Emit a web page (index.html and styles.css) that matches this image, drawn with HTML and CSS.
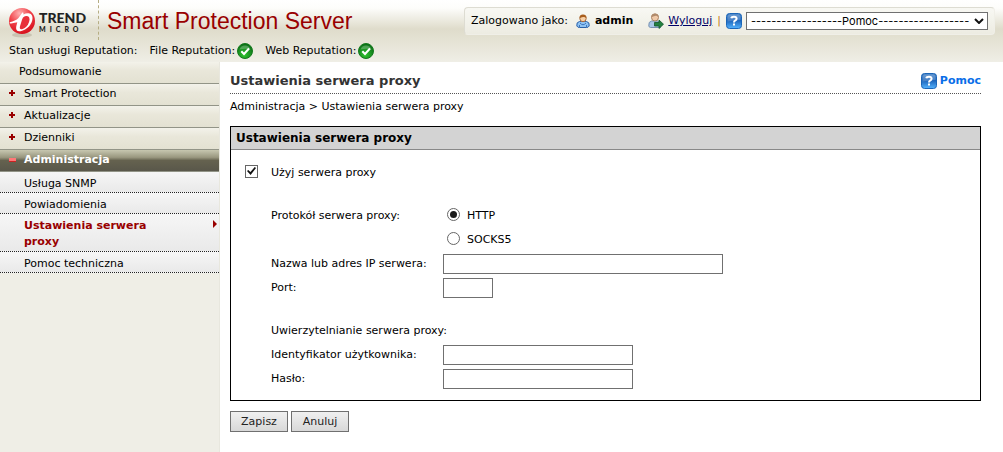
FILE: index.html
```html
<!DOCTYPE html>
<html lang="pl">
<head>
    <meta charset="UTF-8">
    <meta name="viewport" content="width=device-width, initial-scale=1.0">
    <title>Smart Protection Server - Ustawienia serwera proxy</title>
    <link rel="stylesheet" href="styles.css">
</head>
<body>
    <!-- shared icon shapes -->
    <svg class="defs" width="0" height="0" aria-hidden="true">
        <defs>
            <linearGradient id="blue" x1="0" y1="0" x2="0" y2="1">
                <stop offset="0" stop-color="#4a86c8"/>
                <stop offset="0.45" stop-color="#1b62b8"/>
                <stop offset="1" stop-color="#55b4ff"/>
            </linearGradient>
            <radialGradient id="green" cx="0.45" cy="0.75" r="0.7">
                <stop offset="0" stop-color="#2fc52f"/>
                <stop offset="1" stop-color="#0b6e17"/>
            </radialGradient>
            <radialGradient id="red" cx="0.4" cy="0.2" r="0.8">
                <stop offset="0" stop-color="#ffb0b0"/>
                <stop offset="0.5" stop-color="#f0434a"/>
                <stop offset="1" stop-color="#d8101c"/>
            </radialGradient>
            <symbol id="help" viewBox="0 0 16 16">
                <rect x="0.5" y="0.5" width="15" height="15" rx="3" fill="url(#blue)" stroke="#1c66b8"/>
                <path d="M1.5 4q0-2.5 2.5-2.5h8q2.5 0 2.5 2.5v3q-6 0-13 1.500z" fill="#fff" opacity="0.2"/>
                <path d="M5.300 5.200Q5.600 3.800 8 3.800q2.600 0 2.600 1.900 0 1.200-1.500 2-1.100.6-1.100 1.700" fill="none" stroke="#fff" stroke-width="2"/>
                <rect x="7" y="10.500" width="2" height="2" fill="#fff"/>
            </symbol>
            <symbol id="ok" viewBox="0 0 16 16">
                <circle cx="8" cy="8" r="7.500" fill="url(#green)" stroke="#157a1e"/>
                <path d="M2.500 6.500a5.800 5.800 0 0 1 11 0q-5-1.500-11 0z" fill="#fff" opacity="0.25"/>
                <path d="M4.300 8.200l2.700 2.800 5-5.500" fill="none" stroke="#fff" stroke-width="2"/>
            </symbol>
        </defs>
    </svg>

    <header class="header">
        <div class="topbar">
            <div class="logo">
                <svg class="logo-ball" viewBox="0 0 28 32" aria-hidden="true">
                    <ellipse cx="14" cy="28" rx="10" ry="2.500" fill="#9a9078" opacity="0.35"/>
                    <circle cx="14" cy="14" r="13" fill="url(#red)"/>
                    <path d="M15.500 7.500C19 5.500 24.500 5.800 24.500 11c0 6-5.500 12-12 13.200-3.500.6-5-1.500-4.200-5l1-4L3 16.500c-1 0-1.500-.5-1.200-1.300C5.500 14.500 8.500 13 10.500 11l3.500-5c.6-.8 1.600-.3 1.400.5z" fill="#fff"/>
                    <path d="M15 10.500c3-2.300 6.500-1.800 6.500 1.800 0 4.500-3.700 9.200-7.700 10-1.800.3-2.300-1-1.800-3l2-6.500z" fill="#e8303a"/>
                </svg>
                <div class="logo-text">
                    <span class="logo-trend">TREND</span>
                    <span class="logo-micro">MICRO</span>
                </div>
            </div>
            <div class="product">Smart Protection Server</div>
            <div class="userbar">
                <span>Zalogowano jako:</span>
                <svg class="user-icon" viewBox="0 0 14 14" aria-hidden="true">
                    <path d="M.8 12q-.6-4 2.700-4.500h7q3.300.5 2.700 4.500-1 1.500-2.500 1.500H3.300Q1.800 13.500.8 12z" fill="#8fc3f3" stroke="#2b61a8"/>
                    <circle cx="7" cy="4.500" r="3.200" fill="#f7cfa4" stroke="#a5693c"/>
                    <path d="M3.500 4Q3.300.5 7 .5T10.500 4Q9 2.700 7 3T3.500 4z" fill="#a85d1c"/>
                    <path d="M4 9q3 3.500 6 0M3.500 11v2M10.500 11v2" fill="none" stroke="#3c77bf"/>
                </svg>
                <b>admin</b>
                <svg class="logout-icon" viewBox="0 0 16 16" aria-hidden="true">
                    <path d="M.8 13q-.5-4.500 2.700-5h6q3 1 3 4v2.500H2.500Q1.200 14.500.8 13z" fill="#a9c8e6" stroke="#7891b1"/>
                    <circle cx="7" cy="4.500" r="3.500" fill="#efc9a8" stroke="#a98365"/>
                    <path d="M3.300 4.200Q3.300.5 7 .5t3.700 3.700Q9 2.500 7 2.900T3.300 4.200z" fill="#b08a6a"/>
                    <path d="M6.500 9.500h4.500V7l4.500 4.200-4.500 4.300v-2.500H6.500z" fill="#22803f" stroke="#135528" stroke-width="0.800"/>
                </svg>
                <a class="logout" href="#">Wyloguj</a>
                <span class="divider">|</span>
                <svg class="icon" aria-hidden="true"><use href="#help"/></svg>
                <div class="help-select">
                    <select aria-label="Pomoc">
                        <option>------------------Pomoc------------------</option>
                    </select>
                    <svg class="arrow" viewBox="0 0 10 6" aria-hidden="true"><path d="M1 1l4 4 4-4" fill="none" stroke="#111" stroke-width="2"/></svg>
                </div>
            </div>
        </div>
        <div class="status">
            <span>Stan usługi Reputation:</span>
            <span class="status-item">File Reputation: <svg class="icon" aria-hidden="true"><use href="#ok"/></svg></span>
            <span class="status-item">Web Reputation: <svg class="icon" aria-hidden="true"><use href="#ok"/></svg></span>
        </div>
    </header>

    <div class="page">
        <nav class="sidebar">
            <a class="menu plain" href="#">Podsumowanie</a>
            <a class="menu plus" href="#">Smart Protection</a>
            <a class="menu plus" href="#">Aktualizacje</a>
            <a class="menu plus" href="#">Dzienniki</a>
            <a class="menu minus" href="#">Administracja</a>
            <a class="submenu" href="#">Usługa SNMP</a>
            <a class="submenu" href="#">Powiadomienia</a>
            <a class="submenu current" href="#">Ustawienia serwera proxy</a>
            <a class="submenu" href="#">Pomoc techniczna</a>
        </nav>

        <main class="content">
            <div class="title">
                <h1>Ustawienia serwera proxy</h1>
                <a class="help" href="#"><svg class="icon" aria-hidden="true"><use href="#help"/></svg>Pomoc</a>
            </div>
            <div class="breadcrumb">Administracja &gt; Ustawienia serwera proxy</div>

            <form>
                <section class="box">
                    <h2>Ustawienia serwera proxy</h2>
                    <div class="box-body">
                        <div class="use-proxy">
                            <input type="checkbox" id="useproxy" checked>
                            <label for="useproxy">Użyj serwera proxy</label>
                        </div>
                        <div class="fields">
                            <span id="protocol">Protokół serwera proxy:</span>
                            <div class="radios" role="radiogroup" aria-labelledby="protocol">
                                <label><input type="radio" name="protocol" checked>HTTP</label>
                                <label><input type="radio" name="protocol">SOCKS5</label>
                            </div>
                            <label for="server">Nazwa lub adres IP serwera:</label>
                            <input type="text" id="server" class="long">
                            <label for="port">Port:</label>
                            <input type="text" id="port" class="short">
                        </div>
                        <div class="fields">
                            <span class="full">Uwierzytelnianie serwera proxy:</span>
                            <label for="user">Identyfikator użytkownika:</label>
                            <input type="text" id="user">
                            <label for="psw">Hasło:</label>
                            <input type="password" id="psw">
                        </div>
                    </div>
                </section>
                <div class="buttons">
                    <button type="submit">Zapisz</button>
                    <button type="button">Anuluj</button>
                </div>
            </form>
        </main>
    </div>
</body>
</html>
```

FILE: styles.css
```css
* {
    box-sizing: border-box;
}

body {
    margin: 0;
    min-height: 100vh;
    display: flex;
    flex-direction: column;
    font-family: Verdana, "DejaVu Sans", sans-serif;
    font-size: 11px;
    line-height: 16px;
    color: #000;
    background-color: #fff;
}

.defs {
    position: absolute;
}

.icon {
    width: 16px;
    height: 16px;
    flex: none;
}

/* header */
.header {
    height: 62px;
    background: linear-gradient(#fff 0, #fdfdfb 8px, #dfdccb 29px, #e3e1d2 38px, #efeee6 62px);
}

.topbar {
    display: flex;
    height: 40px;
    padding-right: 8px;
}

.logo {
    display: flex;
    align-items: center;
    width: 99px;
    padding-left: 8px;
    border-right: 1px dashed #b5ad83;
}

.logo-ball {
    width: 28px;
    height: 32px;
    margin-top: 6px;
}

.logo-text {
    display: flex;
    flex-direction: column;
    margin: 3px 0 0 3px;
    font-family: Lato, sans-serif;
    font-weight: 900;
    color: #222;
}

.logo-trend {
    font-size: 14px;
    line-height: 14px;
}

.logo-micro {
    font-size: 7px;
    line-height: 8px;
    letter-spacing: 4px;
}

.product {
    flex: 1;
    padding-left: 8px;
    font-family: Arial, "Liberation Sans", sans-serif;
    font-size: 23px;
    line-height: 42px;
    white-space: nowrap;
    color: #990000;
}

.userbar {
    display: flex;
    align-items: center;
    height: 28px;
    margin-top: 7px;
    padding: 0 6px;
    border: 1px solid #dddcd2;
    border-right-color: #f0efe8;
    border-bottom-color: #f0efe8;
    border-radius: 4px;
    background: linear-gradient(#f8f8f3, #edece2);
    white-space: nowrap;
}

.user-icon {
    width: 14px;
    height: 14px;
    margin: 0 5px 0 8px;
}

.logout-icon {
    width: 16px;
    height: 16px;
    margin: 0 4px 0 15px;
}

.logout {
    color: #000066;
}

.divider {
    margin: 0 5px;
    color: #c27a10;
}

.help-select {
    position: relative;
    margin-left: 4px;
}

.help-select select {
    display: block;
    width: 242px;
    height: 18px;
    padding: 0 4px;
    border: 1px solid #707070;
    border-radius: 0;
    background-color: #fff;
    appearance: none;
    font-family: "Segoe UI", Inter, sans-serif;
    font-size: 11px;
    color: #000;
}

.arrow {
    position: absolute;
    top: 6px;
    right: 4px;
    width: 10px;
    height: 6px;
    pointer-events: none;
}

.status {
    display: flex;
    align-items: center;
    gap: 12px;
    height: 22px;
    padding-left: 9px;
}

.status-item {
    display: flex;
    align-items: center;
    gap: 2px;
}

/* layout */
.page {
    flex: 1;
    display: flex;
}

.sidebar {
    width: 220px;
    flex: none;
    border-right: 1px solid #e8e7de;
    background-color: #efeee6;
}

/* left menu */
.menu {
    position: relative;
    display: block;
    height: 22px;
    padding-left: 24px;
    line-height: 20px;
    color: #000;
    text-decoration: none;
    border-bottom: 1px solid #929487;
    background: linear-gradient(#f3f2ea, #e9e7da 40%, #e3e1d2);
}

.menu.plain {
    padding-left: 19px;
}

.plus::before,
.minus::before,
.plus::after {
    content: "";
    position: absolute;
    left: 9px;
    top: 8px;
    width: 6px;
    height: 2px;
    background-color: #990000;
}

.plus::after {
    left: 11px;
    top: 6px;
    width: 2px;
    height: 6px;
}

.menu.minus {
    font-weight: bold;
    color: #fff;
    background: linear-gradient(#c7c7b0, #99977f 35%, #65624f 50%, #59574a);
}

.minus::before {
    width: 7px;
    height: 3px;
    border-bottom: 1px solid #cc2222;
    background-color: #ff7777;
}

.submenu {
    position: relative;
    display: block;
    padding: 4px 60px 0 24px;
    color: #000;
    text-decoration: none;
    border-bottom: 1px dotted #222;
    background: linear-gradient(#f6f6f6, #e9e9e9);
}

.submenu.current {
    padding-bottom: 1px;
    font-weight: bold;
    color: #990000;
}

.current::after {
    content: "";
    position: absolute;
    right: 2px;
    top: 6px;
    border: 4px solid transparent;
    border-left-color: #990000;
    border-right-width: 0;
}

/* content */
.content {
    flex: 1;
    padding: 7px 22px 20px 10px;
}

.title {
    display: flex;
    justify-content: space-between;
    align-items: center;
    height: 25px;
    border-bottom: 1px dotted #555;
}

h1 {
    margin: 0;
    font-size: 13px;
    color: #333;
}

.help {
    display: flex;
    align-items: center;
    gap: 3px;
    font-weight: bold;
    color: #0a6ee8;
    text-decoration: none;
}

.breadcrumb {
    margin: 5px 0 11px;
}

.box {
    border: 1px solid #000;
}

h2 {
    margin: 0;
    padding: 3px 5px;
    font-size: 12px;
    line-height: 16px;
    background-color: #d3d3d3;
    border-bottom: 1px solid #888;
}

.box-body {
    display: flex;
    flex-direction: column;
    gap: 19px;
    padding: 11px 14px 9px;
}

.use-proxy {
    display: flex;
    align-items: center;
    gap: 13px;
    height: 24px;
}

.fields {
    display: grid;
    grid-template-columns: 172px 1fr;
    grid-auto-rows: minmax(24px, auto);
    align-items: center;
    padding-left: 26px;
}

#protocol {
    align-self: start;
    line-height: 24px;
}

.full {
    grid-column: 1 / -1;
}

.radios label {
    display: flex;
    align-items: center;
    gap: 7px;
    height: 24px;
    padding-left: 4px;
}

input[type=text],
input[type=password] {
    width: 190px;
    max-width: 100%;
    height: 20px;
    padding: 0 3px;
    border: 1px solid #707070;
    background-color: #fff;
    font: inherit;
}

input.long {
    width: 280px;
}

input.short {
    width: 50px;
}

input[type=checkbox],
input[type=radio] {
    display: grid;
    place-items: center;
    width: 13px;
    height: 13px;
    margin: 0 0 4px;
    border: 1px solid #666;
    background-color: #fff;
    appearance: none;
}

input[type=radio] {
    border-radius: 50%;
}

input[type=radio]:checked::before {
    content: "";
    width: 7px;
    height: 7px;
    border-radius: 50%;
    background-color: #1a1a1a;
}

input[type=checkbox]:checked::before {
    content: "";
    width: 9px;
    height: 8px;
    background-color: #111;
    clip-path: polygon(0 50%, 14% 36%, 38% 62%, 86% 0, 100% 14%, 40% 100%);
}

/* buttons */
.buttons {
    display: flex;
    gap: 3px;
    margin-top: 10px;
}

button {
    width: 58px;
    height: 21px;
    padding: 0;
    border: 1px solid #707070;
    background: linear-gradient(#f0f0f0, #d8d8d8);
    font: inherit;
    color: #222;
}

input:focus,
button:focus {
    outline: 1px dotted #333;
}
```
